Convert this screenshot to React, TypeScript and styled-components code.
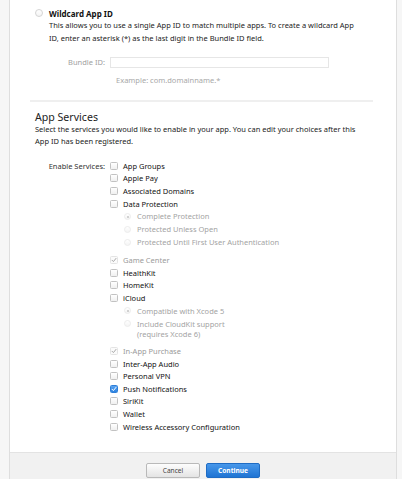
import React from "react";
import styled, { createGlobalStyle, css } from "styled-components";

const FONT = `"Noto Sans", "DejaVu Sans", sans-serif`;

const GlobalStyle = createGlobalStyle`
  html, body { margin: 0; padding: 0; }
  body {
    background: #f6f6f6;
    font-family: ${FONT};
    color: #333;
  }
`;

const Page = styled.div`
  padding: 0 5px 0 9px;
  height: 479px;
  overflow: hidden;
`;

const Panel = styled.div`
  background: #fff;
  border-left: 1px solid #dedede;
  border-right: 1px solid #dedede;
  display: flex;
  flex-direction: column;
`;

const Content = styled.div`
  padding: 7px 23px 19px 20px;
  display: flex;
  flex-direction: column;
`;

const OptionRow = styled.div`
  display: flex;
  align-items: center;
  padding-left: 5px;
  height: 12px;
`;

const Radio = styled.span<{ $size?: number; $dot?: boolean; $faint?: boolean }>`
  box-sizing: border-box;
  width: ${(p) => p.$size ?? 8}px;
  height: ${(p) => p.$size ?? 8}px;
  border-radius: 50%;
  border: 1px solid ${(p) => (p.$faint ? "#ececec" : "#d4d4d4")};
  background: linear-gradient(#ffffff, #f4f4f4);
  flex: none;
  display: flex;
  align-items: center;
  justify-content: center;
  ${(p) =>
    p.$dot &&
    css`
      &::after {
        content: "";
        width: 2px;
        height: 2px;
        border-radius: 50%;
        background: #c4c4c4;
      }
    `}
`;

const OptionTitle = styled.span`
  margin-left: 6px;
  font-weight: 700;
  font-size: 8px;
  color: #111;
`;

const Desc = styled.p<{ $indent?: number; $lh?: number }>`
  margin: 0;
  padding-left: ${(p) => p.$indent ?? 0}px;
  font-size: 7.5px;
  line-height: ${(p) => p.$lh ?? 13}px;
  color: #222;
  white-space: nowrap;
`;

const FormRow = styled.div<{ $top?: number }>`
  display: grid;
  grid-template-columns: 75px 1fr;
  column-gap: 5px;
  margin-top: ${(p) => p.$top ?? 0}px;
  align-items: start;
`;

const FieldLabel = styled.label<{ $muted?: boolean; $lh?: number }>`
  text-align: right;
  font-size: 7.5px;
  line-height: ${(p) => p.$lh ?? 11}px;
  color: ${(p) => (p.$muted ? "#a0a0a0" : "#333")};
  white-space: nowrap;
`;

const TextField = styled.div`
  box-sizing: border-box;
  width: 219px;
  height: 11px;
  border: 1px solid #e6e6e6;
  background: #fff;
`;

const Hint = styled.div`
  padding-left: 6px;
  margin-top: 6px;
  font-size: 7.5px;
  line-height: 12px;
  color: #a8a8a8;
`;

const Divider = styled.hr`
  border: none;
  height: 2px;
  background: #efefef;
  margin: 14px 0 0 0;
`;

const Heading = styled.h2`
  margin: 8.5px 0 0 5px;
  font-weight: 400;
  font-size: 10.6px;
  line-height: 12px;
  color: #222;
`;

const ServicesList = styled.div`
  display: flex;
  flex-direction: column;
`;

const CheckRow = styled.div`
  display: flex;
  align-items: center;
  height: 12.67px;
`;

const Box = styled.span<{ $checked?: boolean; $disabled?: boolean }>`
  box-sizing: border-box;
  width: 8px;
  height: 8px;
  flex: none;
  border-radius: 1.5px;
  border: 1px solid #c2c2c2;
  background: linear-gradient(#ffffff, #f0f0f0);
  display: flex;
  align-items: center;
  justify-content: center;
  ${(p) =>
    p.$checked &&
    !p.$disabled &&
    css`
      border-color: #2f7fd9;
      background: linear-gradient(#5aa3f0, #2d83e0);
    `}
  ${(p) =>
    p.$disabled &&
    css`
      border-color: #e4e4e4;
      background: #fbfbfb;
    `}
`;

const CheckLabel = styled.span<{ $disabled?: boolean }>`
  margin-left: 5px;
  font-size: 7.5px;
  color: ${(p) => (p.$disabled ? "#9a9a9a" : "#111")};
  white-space: nowrap;
`;

const SubList = styled.div`
  display: flex;
  flex-direction: column;
  padding-left: 14px;
  margin-bottom: 5px;
`;

const SubRow = styled.div`
  display: flex;
  align-items: flex-start;
  min-height: 12.9px;
  padding-top: 3px;
  box-sizing: border-box;
`;

const SubLabel = styled.span`
  margin-left: 6px;
  font-size: 7.5px;
  line-height: 10.5px;
  margin-top: -1.8px;
  color: #a3a3a3;
`;

const Footer = styled.div`
  border-top: 1px solid #e3e3e3;
  background: #f1f1f1;
  padding: 10px 0 12px;
  display: flex;
  justify-content: center;
  gap: 6px;
`;

const Button = styled.button<{ $primary?: boolean }>`
  box-sizing: border-box;
  width: 54px;
  height: 15px;
  padding: 0;
  border-radius: 2px;
  font-family: ${FONT};
  font-size: 6.6px;
  line-height: 13px;
  cursor: pointer;
  ${(p) =>
    p.$primary
      ? css`
          border: 1px solid #1f6cc4;
          background: linear-gradient(#4797ea, #1f74d3);
          color: #fff;
          font-weight: 700;
        `
      : css`
          border: 1px solid #b9b9b9;
          background: linear-gradient(#fdfdfd, #e4e4e4);
          color: #444;
        `}
`;

const Check = ({ color }: { color: string }) => (
  <svg width="6" height="6" viewBox="0 0 6 6">
    <path d="M1 3.2 L2.4 4.6 L5 1.4" fill="none" stroke={color} strokeWidth="1" strokeLinecap="round" strokeLinejoin="round" />
  </svg>
);

type Service = {
  name: string;
  checked?: boolean;
  disabled?: boolean;
  sub?: { label: React.ReactNode; dot?: boolean }[];
};

const services: Service[] = [
  { name: "App Groups" },
  { name: "Apple Pay" },
  { name: "Associated Domains" },
  {
    name: "Data Protection",
    sub: [
      { label: "Complete Protection", dot: true },
      { label: "Protected Unless Open" },
      { label: "Protected Until First User Authentication" },
    ],
  },
  { name: "Game Center", checked: true, disabled: true },
  { name: "HealthKit" },
  { name: "HomeKit" },
  {
    name: "iCloud",
    sub: [
      { label: "Compatible with Xcode 5", dot: true },
      {
        label: (
          <>
            Include CloudKit support
            <br />
            (requires Xcode 6)
          </>
        ),
      },
    ],
  },
  { name: "In-App Purchase", checked: true, disabled: true },
  { name: "Inter-App Audio" },
  { name: "Personal VPN" },
  { name: "Push Notifications", checked: true },
  { name: "SiriKit" },
  { name: "Wallet" },
  { name: "Wireless Accessory Configuration" },
];

export default function App() {
  return (
    <>
      <GlobalStyle />
      <Page>
        <Panel>
          <Content>
            <OptionRow>
              <Radio />
              <OptionTitle>Wildcard App ID</OptionTitle>
            </OptionRow>
            <Desc $indent={19}>
              This allows you to use a single App ID to match multiple apps. To create a wildcard App
              <br />
              ID, enter an asterisk (*) as the last digit in the Bundle ID field.
            </Desc>
            <FormRow $top={12}>
              <FieldLabel $muted>Bundle ID:</FieldLabel>
              <div>
                <TextField />
                <Hint>Example: com.domainname.*</Hint>
              </div>
            </FormRow>
            <Divider />
            <Heading>App Services</Heading>
            <Desc $indent={5} $lh={12}>
              Select the services you would like to enable in your app. You can edit your choices after this
              <br />
              App ID has been registered.
            </Desc>
            <FormRow $top={13}>
              <FieldLabel $lh={12.67}>Enable Services:</FieldLabel>
              <ServicesList>
                {services.map((s) => (
                  <React.Fragment key={s.name}>
                    <CheckRow>
                      <Box $checked={s.checked} $disabled={s.disabled}>
                        {s.checked && <Check color={s.disabled ? "#a8a8a8" : "#fff"} />}
                      </Box>
                      <CheckLabel $disabled={s.disabled}>{s.name}</CheckLabel>
                    </CheckRow>
                    {s.sub && (
                      <SubList>
                        {s.sub.map((o, i) => (
                          <SubRow key={i}>
                            <Radio $size={7} $dot={o.dot} $faint />
                            <SubLabel>{o.label}</SubLabel>
                          </SubRow>
                        ))}
                      </SubList>
                    )}
                  </React.Fragment>
                ))}
              </ServicesList>
            </FormRow>
          </Content>
          <Footer>
            <Button>Cancel</Button>
            <Button $primary>Continue</Button>
          </Footer>
        </Panel>
      </Page>
    </>
  );
}
